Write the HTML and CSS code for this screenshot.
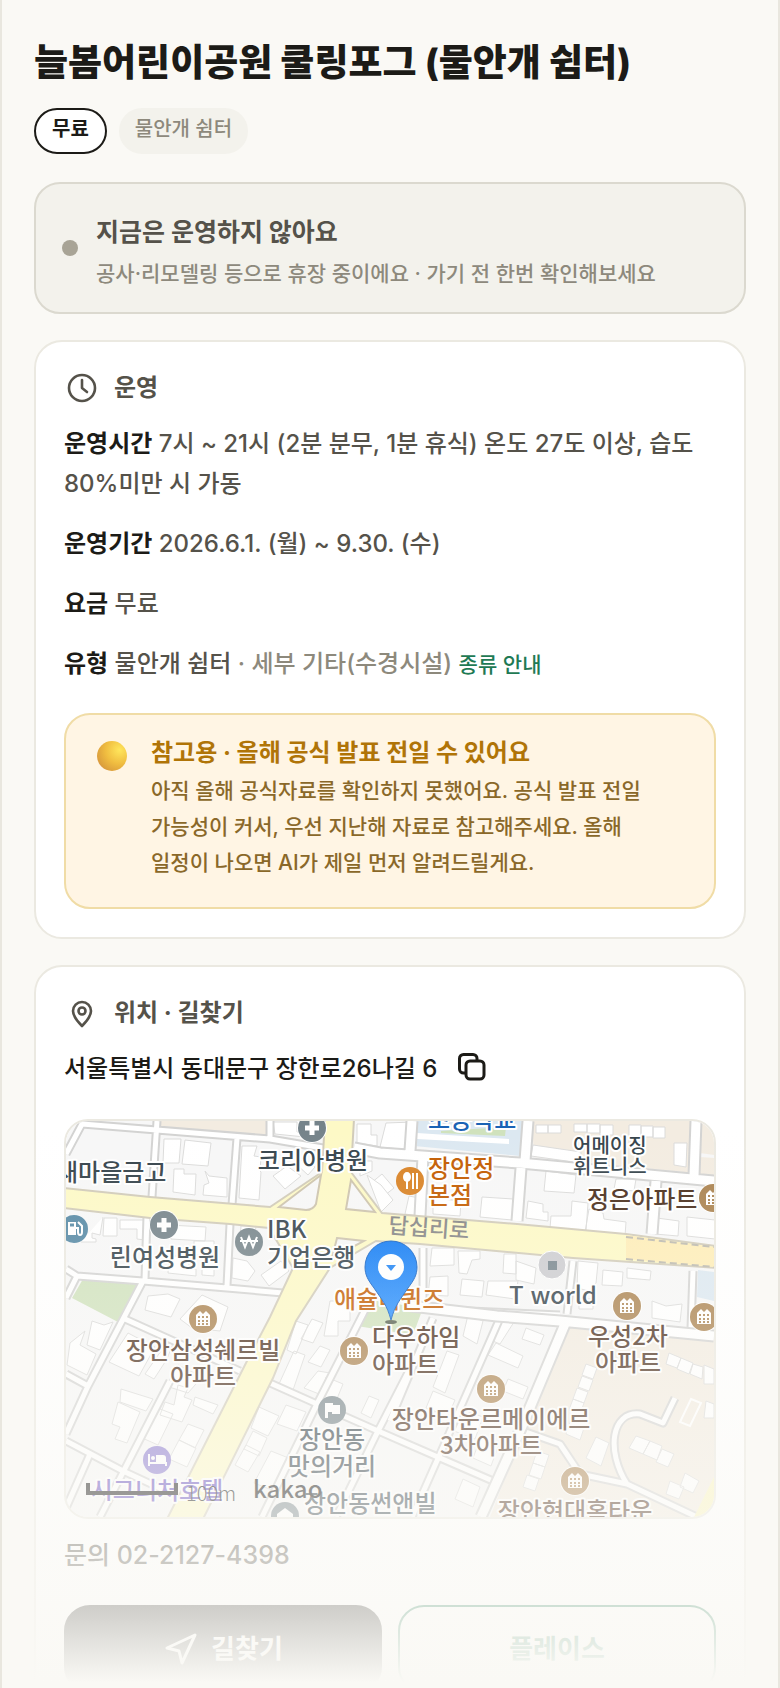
FILE: index.html
```html
<!DOCTYPE html>
<html lang="ko">
<head>
  <meta charset="UTF-8" />
  <meta name="viewport" content="width=device-width, initial-scale=1" />
  <title>늘봄어린이공원 쿨링포그</title>
  <link rel="stylesheet" href="styles.css">
</head>
<body>
<main class="page">
  <h1 class="title">늘봄어린이공원 쿨링포그 (물안개 쉼터)</h1>
  <div class="chips">
    <span class="chip chip-free">무료</span>
    <span class="chip">물안개 쉼터</span>
  </div>

  <section class="status">
    <span class="status-dot"></span>
    <div>
      <h2 class="status-title">지금은 운영하지 않아요</h2>
      <p class="status-text">공사·리모델링 등으로 휴장 중이에요 · 가기 전 한번 확인해보세요</p>
    </div>
  </section>

  <section class="card">
    <h2 class="card-title">
      <svg class="icon" viewBox="0 0 36 36" stroke-width="2.6"><circle cx="18" cy="18" r="13"/><path d="M18 10v8l5 4"/></svg>
      운영
    </h2>
    <div class="rows">
      <p><b>운영시간</b> 7시 ~ 21시 (2분 분무, 1분 휴식) 온도 27도 이상, 습도 80%미만 시 가동</p>
      <p><b>운영기간</b> 2026.6.1. (월) ~ 9.30. (수)</p>
      <p><b>요금</b> 무료</p>
      <p><b>유형</b> 물안개 쉼터 <span class="muted">· 세부 기타(수경시설)</span> <a class="guide" href="#types">종류 안내</a></p>
    </div>
    <div class="notice">
      <span class="notice-dot"></span>
      <div>
        <h3 class="notice-title">참고용 · 올해 공식 발표 전일 수 있어요</h3>
        <p class="notice-text">아직 올해 공식자료를 확인하지 못했어요. 공식 발표 전일 가능성이 커서, 우선 지난해 자료로 참고해주세요. 올해 일정이 나오면 AI가 제일 먼저 알려드릴게요.</p>
      </div>
    </div>
  </section>

  <section class="card">
    <h2 class="card-title">
      <svg class="icon" viewBox="0 0 36 36" stroke-width="2.6"><path d="M18 31c-6-6-9-10-9-15a9 9 0 0 1 18 0c0 5-3 9-9 15z"/><circle cx="18" cy="16" r="3.5"/></svg>
      위치 · 길찾기
    </h2>
    <div class="address">
      <span>서울특별시 동대문구 장한로26나길 6</span>
      <button class="copy" type="button" aria-label="주소 복사">
        <svg viewBox="0 0 32 32"><path d="M9 20H6.500a4 4 0 0 1-4-4V5.500a4 4 0 0 1 4-4H16a4 4 0 0 1 4 4V8"/><rect x="9" y="8" width="18" height="18" rx="4"/></svg>
      </button>
    </div>

    <div class="map">
      <svg class="map-svg" viewBox="0 0 648 396" preserveAspectRatio="xMidYMid slice" role="img" aria-label="지도">
        <defs>
          <linearGradient id="pin" x1="0" y1="0" x2="0" y2="1"><stop offset="0" stop-color="#0f7af4"/><stop offset="1" stop-color="#2c92ff"/></linearGradient>
          <g id="apt"><circle r="15" fill="#fff"/><circle r="14" fill="#ab8350"/><path d="M-7 7V-4l4-4 3 3 3-3 4 4V7z" fill="#fff"/><path d="M-5-2h10M-5 2h10M-5 5h10" stroke="#ab8350" stroke-width="2" stroke-dasharray="2 2"/></g>
          <g id="hospital"><circle r="15" fill="#fff"/><circle r="14" fill="#75838a"/><path d="M0-7V7M-7 0H7" stroke="#fff" stroke-width="5"/></g>
        </defs>
        <rect width="648" height="396" fill="#f7f7f7"/>

        <!-- areas -->
        <path fill="#f3ece1" d="M94 0H201V15L94 5zM466 0H627V52L468 36zM634 0H648V34L634 32zM634 36L648 37V55L632 53zM504 207L648 218V396H424L447 337z"/>
        <path fill="#dce8f1" d="M349 0H458L454 35L348 25zM632 149L648 151V180L631 176z"/>
        <path fill="#d0e2bd" d="M17 158L71 163L52 201L6 177zM298 178L357 187L347 214L291 205zM375 10L440 6L439 15L375 12z"/>
        <path fill="#fff" d="M351 12L443 18V23L351 18z"/>

        <!-- buildings -->
        <g class="building">
          <path d="M98 18h17l-2 24H97zM119 19l26 3-3 23-26-2zM108 48h10v5h12l-1 21-22-3zM139 50l4 5 18 2v19l-24-2 1-10 5-2zM176 25h15l-3 10 7 1-1 14 1 1-2 28-20-2zM207 1h24v10h8v5l-30-3zM207 55l14-10 14 10-16 13zM230 43l8-5 11 8-7 8zM291 3h14v11h6v11l-20-3zM304 63l12-10 12 14-14 11zM294 40h12v10l-12 5z"/>
          <path d="M37 96l-3 18-8-2v5l4 1v3h-15M38 97h13v18H37zM54 99h25v20l-8-1v-10H54zM102 104l38 2-1 14-34-2zM103 135h20v13h7v7l-28-3zM128 120h20v35l-12-1v-20h-8zM175 105h15l-2 18-14-2zM167 137l14 3 8 10-7 10-16-3zM195 154l20-14 8 10-20 15zM264 180h20v20h-12v15h-14z"/>
          <path d="M82 175l20-2 12 5-9 18-26-7zM114 198l22-24 26 12-8 24-28-3zM26 200l12 4 9-3-13 28-13-5zM4 222l15-12-5 14 16 9-9 21-20-10zM62 212l27 14-16 29-30-14zM95 230l14-13-8 21-13 20-9-5zM55 268l32 10-7 12-26-9zM52 281l22 10-13 31-12-4 5-12-8-3zM89 286l18 7-15 31-18-8zM112 244l24 12-14 16-22-7zM112 264l10 3-4 9 8 3-10 22-22-7 5-13 9 3zM129 276l23 8-5 9-20-9zM122 303l16 6-9 18-16-8zM113 319l17 8-9 19-18-8z"/>
          <path d="M230 200l12 4-12 29-9-4zM246 198l11 4-10 20-12-4zM254 225l10 4-9 17-13-5zM228 230l11 4-12 35-14-6zM252 250l12 2-6 23-20-8zM260 256l17 7-9 22-10-5zM193 286l20 9-11 20-17-8zM220 284l20 7-9 19-20-7zM187 310l14 7-8 18-15-7zM180 324l14 7-12 20-13-7zM205 330l20 8-14 33-23-9zM303 275l10 4-8 18-10-5z"/>
          <path d="M320 2l27-1-3 28-30-3zM301 54l14 10 12 15-12 12zM343 75l15 3-4 17-15-2zM367 77l28 3-1 15-27-2zM416 76l31 2-1 21-32-3zM480 50l30 4-2 18-30-2zM462 80l15 3v8h5v9l-22-3zM506 80l16 2-2 28-36-3 1-12h20zM523 88l14 4 1 6 22 3-1 14-40-4zM550 58h20l-2 12-20-2zM591 97l22 3-1 15-23-2zM621 96l28 3v19l-28-3zM608 22h13l-1 24-12-2z"/>
          <path d="M470 4h12v8h-12zM482 4h13v8h-13zM508 3h13v8h-13zM521 3h13v9h-13zM534 4h13v10h-13zM563 4h12v11h-12zM575 5h12v11h-12zM587 6h12v11h-12zM467 24l48 7v11l-50-7z"/>
          <path d="M366 127h22v17l-24 1zM392 130h22v8l-8 1-5 14-8-1zM438 133h12v20l-13-1zM364 156l18-1v20l-20-1zM396 158l22 2-2 16-22-2zM422 160h30l-3 18-29-4zM450 140l20 7-2 16-18-4zM512 140l20 2-2 20-7 8-12-3zM537 149l20 2-1 14-20-1zM561 147l24 3-1 9-23-2zM513 178h14v10h-14zM586 180l14 5 16-2-2 18-28-4z"/>
          <path d="M402 194l15 6-6 23-14-8zM436 198l12 3-14 22-12-5zM460 207l18 7-4 10-18-6zM430 222l27 13-5 12-30-13zM381 230l12 4-14 38-12-6zM367 270l22 9-7 16-22-8zM442 258l20 8-5 12-20-8zM395 288l22 8-8 22-21-8zM415 316l18 7-8 22-18-8zM397 358l17 8-7 20-18-8zM471 330l12 4-4 12-12-4zM467 342l12 4-4 12-12-4zM461 354l12 4-4 12-12-4z"/>
          <path d="M520 243l11 4-4 11-11-4zM516 255l11 4-4 11-11-4zM511 267l11 4-4 11-11-4zM507 278l11 4-4 11-11-4zM505 298l14 6-5 15-14-6zM530 316l13 6-8 23-15-8zM603 232l12 5-4 10-11-4zM615 237l12 5-4 11-12-5zM627 243l10 3-1 12-12-5zM638 244l10 4v15h-10zM570 315l14 5-7 13-14-6zM584 320l12 5-5 14-14-6zM596 328l12 5-6 13-12-5zM619 352l14 8-6 12-13-6zM604 360l14 6-5 12-13-5zM640 280l8 3v14h-10z"/>
          <path fill="none" stroke="#fff" stroke-width="2" d="M625 278l10 4-11 23-10-4z"/>
        </g>

        <!-- side streets -->
        <g id="streets">
          <path class="case" d="M0 33L16 3L204 18L257 27M91 0L86 76M204 0V17M171 17L166 84M164 103L161 165M81 95L79 159M0 148L11 155L77 160L161 167L217 172M11 155L0 177M77 160L22 265L0 313M0 253L22 265M59 198L174 250M104 260L34 396M0 320L57 350L100 370M24 333L-4 396M204 262L251 283L312 310L374 337L427 360M300 187L251 283L196 396M350 236L312 310L270 396M367 197L324 300M434 197L374 333L346 396M357 127V188L494 194M507 140L501 193M627 150L625 207M457 310L494 323L514 353L561 363L631 396M561 363C540 330 545 290 574 293L597 302L609 277"/>
          <path class="street" d="M0 33L16 3L204 18L257 27M91 0L86 76M204 0V17M171 17L166 84M164 103L161 165M81 95L79 159M0 148L11 155L77 160L161 167L217 172M11 155L0 177M77 160L22 265L0 313M0 253L22 265M59 198L174 250M104 260L34 396M0 320L57 350L100 370M24 333L-4 396M204 262L251 283L312 310L374 337L427 360M300 187L251 283L196 396M350 236L312 310L270 396M367 197L324 300M434 197L374 333L346 396M357 127V188L494 194M507 140L501 193M627 150L625 207M457 310L494 323L514 353L561 363L631 396M561 363C540 330 545 290 574 293L597 302L609 277"/>
          <path class="case wide" d="M288 27L314 32L454 42L648 60M346 0L344 30M462 0L459 40M630 0L628 55M455 47L451 100M590 60L586 113M357 35L354 95M345 185L431 195L494 200L648 215M499 203L457 303L415 396"/>
          <path class="street wide" d="M288 27L314 32L454 42L648 60M346 0L344 30M462 0L459 40M630 0L628 55M455 47L451 100M590 60L586 113M357 35L354 95M345 185L431 195L494 200L648 215M499 203L457 303L415 396"/>
        </g>

        <!-- main roads -->
        <path class="main-road" d="M-2 67L84 76L204 86L256 51L259-2H288L285 51L316 92L451 103L560 113L650 125V147L507 137L354 123L310 120L264 147L230 200L207 257L137 398H101L181 240L204 196L227 147L203 107L164 103L84 97L-2 87z"/>
        <path class="island" d="M213 86L255 54L250 83Q247 89 240 89zM285 59L309 91L280 88zM271 117L298 120L266 137z"/>
        <path fill="#feedb7" d="M560 114L648 126V146L560 138z"/>
        <path d="M560 116L648 126M560 138L648 146" stroke="#bcb9ae" stroke-width="2" stroke-dasharray="7 4"/>
        <path d="M650 352L628 396H648z" fill="#fbf5bd"/>

        <!-- places -->
        <use href="#hospital" x="246" y="7"/>
        <use href="#hospital" x="98" y="104"/>
        <use href="#apt" x="647" y="77"/>
        <use href="#apt" x="561" y="185"/>
        <use href="#apt" x="638" y="196"/>
        <use href="#apt" x="137" y="198"/>
        <use href="#apt" x="288" y="230"/>
        <use href="#apt" x="425" y="268"/>
        <use href="#apt" x="509" y="360"/>
        <circle cx="8" cy="108" r="14" fill="#5689a5"/>
        <path d="M2 101h8v13H2z" fill="#fff"/>
        <path d="M4 104h4" stroke="#5689a5" stroke-width="3"/>
        <path d="M10 107h2v4q0 3 2 3t2-3v-6l-4-4" fill="none" stroke="#fff" stroke-width="2"/>
        <circle cx="183" cy="121" r="14" fill="#77858b"/>
        <path d="M175 116l4 10 4-10 4 10 4-10M174 120h18" fill="none" stroke="#fff" stroke-width="2"/>
        <circle cx="344" cy="60" r="14" fill="#d98326"/>
        <ellipse cx="341" cy="56" rx="4" ry="5" fill="#fff"/>
        <path d="M341 58v10M347 52v16M351 52v16" stroke="#fff" stroke-width="2"/>
        <circle cx="486" cy="144" r="14" fill="#ccccd0" stroke="#fff"/>
        <rect x="482" y="140" width="9" height="9" fill="#78868e"/>
        <circle cx="266" cy="289" r="14" fill="#77858b"/>
        <path d="M259 297v-15h8v2h7v9h-8v-2h-4v6z" fill="#fff"/>
        <circle cx="91" cy="339" r="14" fill="#8a79cf"/>
        <path d="M83 333v12M83 342h17v3" fill="none" stroke="#fff" stroke-width="2"/>
        <path d="M90 334h7q3 0 3 3v4H90z" fill="#fff"/><circle cx="87" cy="337" r="2" fill="#fff"/>
        <circle cx="219" cy="395" r="14" fill="#77858b"/>
        <path d="M211 393l8-6 8 6v7h-16z" fill="#fff"/>

        <g class="label">
          <text class="mid" x="247" y="48">코리아병원</text>
          <text x="-10" y="60">새마을금고</text>
          <text class="mid" x="99" y="145">린여성병원</text>
          <text x="201" y="117">IBK</text>
          <text x="201" y="145">기업은행</text>
          <text class="food" x="362" y="56">장안정</text>
          <text class="food" x="362" y="83">본점</text>
          <text class="small" x="507" y="32">어메이징</text>
          <text class="small" x="507" y="53">휘트니스</text>
          <text class="home" x="521" y="87">정은아파트</text>
          <text class="road" x="322" y="112" transform="rotate(4 322 112)">답십리로</text>
          <text x="443" y="183">T world</text>
          <text class="food" x="268" y="187">애슐리퀸즈</text>
          <text class="school" x="362" y="7">초등학교</text>
          <text class="home mid" x="137" y="238">장안삼성쉐르빌</text>
          <text class="home mid" x="137" y="264">아파트</text>
          <text class="home" x="306" y="225">다우하임</text>
          <text class="home" x="306" y="252">아파트</text>
          <text class="home mid" x="562" y="224">우성2차</text>
          <text class="home mid" x="562" y="250">아파트</text>
          <text class="home mid" x="425" y="307">장안타운르메이에르</text>
          <text class="home mid" x="425" y="333">3차아파트</text>
          <text class="mid" x="266" y="327">장안동</text>
          <text class="mid" x="266" y="354">맛의거리</text>
          <text class="hotel mid" x="91" y="378">시그니처호텔</text>
          <text x="238" y="391">장안동썬앤빌</text>
          <text class="home mid" x="509" y="399">장안현대홈타운</text>
        </g>

        <path d="M22 362V372H110V362" fill="none" stroke="#111" stroke-width="4"/>
        <text class="scale" x="120" y="380">100m</text>
        <text class="kakao" x="187" y="377">kakao</text>

        <!-- current place marker -->
        <ellipse cx="325" cy="201" rx="6" ry="2" fill="#55604f"/>
        <path d="M325 199C321 184 316 179 308 167C302 159 299 154 299 146A26 26 0 0 1 351 146C351 154 348 159 342 167C334 179 329 184 325 199z" fill="url(#pin)" stroke="#0f60c4"/>
        <circle cx="325" cy="146" r="13" fill="#fff"/>
        <path d="M320 144h10l-5 6z" fill="#1b82f5"/>
      </svg>
    </div>

    <p class="contact">문의 02-2127-4398</p>
    <div class="actions">
      <button class="btn btn-dark" type="button">
        <svg class="icon" viewBox="0 0 36 36" stroke-width="3"><path d="M32 4L4 17l12 3 3 12z"/></svg>
        길찾기
      </button>
      <button class="btn" type="button">플레이스</button>
    </div>
  </section>
  <div class="fade"></div>
</main>
</body>
</html>
```
FILE: styles.css
```css
* {
  box-sizing: border-box;
}

body, h1, h2, h3, p {
  margin: 0;
}

body {
  background: #faf9f5;
  color: #1c1b17;
  font-family: Inter, "Noto Sans CJK KR", sans-serif;
  font-size: 24px;
  font-weight: 500;
  line-height: 40px;
  word-break: keep-all;
}

.page {
  position: relative;
  height: 100vh;
  overflow: hidden;
  padding: 36px 32px 0;
  border: solid #e9e7df;
  border-width: 0 2px;
}

.title {
  font-size: 37px;
  font-weight: 800;
  line-height: 54px;
}

/* tags under the title */
.chips {
  display: flex;
  gap: 12px;
  margin: 18px 0 28px;
}

.chip {
  height: 46px;
  padding: 0 14px;
  border: 2px solid #f3f2ec;
  border-radius: 23px;
  background: #f3f2ec;
  color: #8d897c;
  font-size: 20px;
  line-height: 38px;
}

.chip-free {
  padding: 0 16px;
  border-color: #1c1b17;
  background: #fff;
  color: #1c1b17;
  font-weight: 600;
}

/* open / closed banner */
.status {
  display: flex;
  align-items: center;
  gap: 18px;
  padding: 26px 26px 18px;
  border: 2px solid #dbd9cf;
  border-radius: 26px;
  background: #f3f2ec;
}

.status-dot {
  flex: none;
  width: 16px;
  height: 16px;
  margin-bottom: 8px;
  border-radius: 50%;
  background: #a8a496;
}

.status-title {
  color: #55524a;
  font-size: 25px;
  font-weight: 700;
  line-height: 44px;
}

.status-text {
  color: #8d897c;
  font-size: 21px;
}

.card {
  margin-top: 26px;
  padding: 26px 28px 28px;
  border: 2px solid #ebe9e1;
  border-radius: 28px;
  background: #fff;
}

.card-title {
  display: flex;
  align-items: center;
  gap: 14px;
  color: #55524a;
  font-size: 24px;
  font-weight: 700;
}

.icon {
  width: 36px;
  height: 36px;
  fill: none;
  stroke: currentColor;
  stroke-linecap: round;
  stroke-linejoin: round;
}

.rows {
  display: flex;
  flex-direction: column;
  gap: 20px;
  margin-top: 16px;
  color: #55524a;
}

.rows b {
  color: #1c1b17;
  font-weight: 700;
}

.muted {
  color: #8d897c;
}

.guide {
  color: #1f7a54;
  font-size: 21px;
  text-decoration: none;
}

/* yellow notice */
.notice {
  display: flex;
  gap: 24px;
  margin-top: 28px;
  padding: 18px 36px 26px 31px;
  border: 2px solid #f0dca6;
  border-radius: 26px;
  background: #fff5e4;
}

.notice-dot {
  flex: none;
  width: 30px;
  height: 30px;
  margin-top: 8px;
  border-radius: 50%;
  background: radial-gradient(circle at 75% 30%, #ffe65c, #f0bd40 45%, #dc9f3c 75%, #d5805a);
}

.notice-title {
  color: #b07407;
  font-size: 24px;
  font-weight: 700;
}

.notice-text {
  color: #8a6829;
  font-size: 21px;
  line-height: 36px;
}

.address {
  display: flex;
  align-items: center;
  gap: 20px;
  margin-top: 16px;
}

.copy {
  display: flex;
  padding: 0;
  border: 0;
  background: none;
}

.copy svg {
  width: 32px;
  height: 32px;
  fill: none;
  stroke: #1c1b17;
  stroke-width: 3;
}

/* map */
.map {
  height: 400px;
  margin-top: 30px;
  overflow: hidden;
  border: 2px solid #ebe9e1;
  border-radius: 24px;
}

.map-svg {
  display: block;
  width: 100%;
  height: 100%;
}

.building {
  fill: #fff;
  stroke: #dbdbda;
}

.case, .street {
  fill: none;
  stroke: #d3d3d2;
  stroke-width: 9;
  stroke-linejoin: round;
}

.street {
  stroke: #fff;
  stroke-width: 5;
}

.case.wide {
  stroke-width: 13;
}

.street.wide {
  stroke-width: 9;
}

.main-road {
  fill: #fdf9c6;
  stroke: #d1cbb9;
  stroke-width: 2;
}

.island {
  fill: #f7f7f7;
  stroke: #cdc4ae;
  stroke-width: 2;
}

.label {
  fill: #35434b;
  stroke: #fff;
  stroke-width: 4;
  stroke-linejoin: round;
  paint-order: stroke;
  font-family: "Noto Sans CJK KR", sans-serif;
  font-size: 24px;
}

.mid {
  text-anchor: middle;
}

.small {
  font-size: 20px;
}

.home {
  fill: #4a2e1c;
}

.food {
  fill: #c35c00;
}

.school {
  fill: #1a63b5;
}

.hotel {
  fill: #6750bf;
}

.road {
  fill: #858585;
  stroke: none;
  font-size: 22px;
}

.scale {
  fill: #111;
  font-family: "Noto Sans CJK KR", sans-serif;
  font-size: 20px;
  font-weight: 300;
}

.kakao {
  fill: #111;
  font-family: "Noto Sans CJK KR", sans-serif;
  font-size: 24px;
}

.contact {
  margin-top: 16px;
  color: #55524a;
  font-size: 25px;
}

.actions {
  display: grid;
  grid-template-columns: 1fr 1fr;
  gap: 16px;
  margin-top: 30px;
}

.btn {
  display: flex;
  align-items: center;
  justify-content: center;
  gap: 12px;
  height: 88px;
  border: 2px solid #1f7a54;
  border-radius: 26px;
  background: #fff;
  color: #1f7a54;
  font: inherit;
  font-size: 26px;
  font-weight: 700;
}

.btn-dark {
  border-color: #1c1b17;
  background: #1c1b17;
  color: #fff;
}

/* content fades out toward the bottom of the screen */
.fade {
  position: absolute;
  right: 0;
  bottom: 0;
  left: 0;
  height: 560px;
  background: linear-gradient(rgba(250, 249, 245, 0), rgba(250, 249, 245, 0.25) 34%, rgba(250, 249, 245, 0.7) 76%, rgba(250, 249, 245, 0.8) 85%, #faf9f5 99%);
  pointer-events: none;
}
```
